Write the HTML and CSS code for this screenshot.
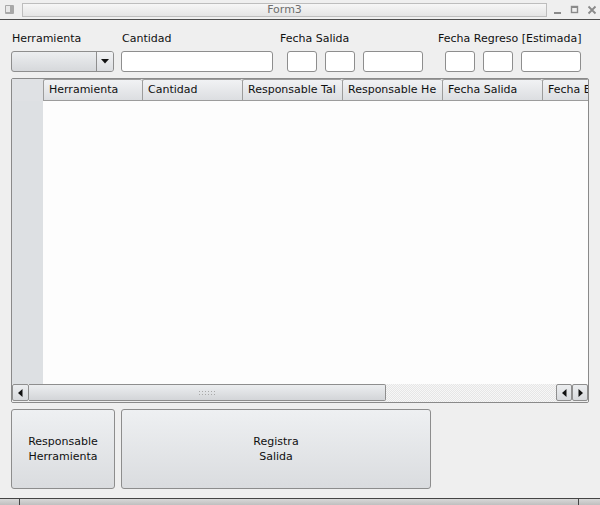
FILE: index.html
```html
<!DOCTYPE html>
<html>
<head>
<meta charset="utf-8">
<link rel="stylesheet" href="styles.css">
</head>
<body>
<div class="window">
  <div class="titlebar">
    <div class="sysicon"><div class="sysicon-in"></div></div>
    <div class="titlefield">Form3</div>
    <div class="tbtns">
      <svg width="10" height="10" viewBox="0 0 10 10"><rect x="1" y="7" width="7" height="2" fill="#8a8a8a"/></svg>
      <svg width="10" height="10" viewBox="0 0 10 10"><rect x="1.5" y="1.5" width="6" height="6" fill="none" stroke="#8a8a8a" stroke-width="1.4"/><rect x="1" y="1" width="7" height="2" fill="#8a8a8a"/></svg>
      <svg width="10" height="10" viewBox="0 0 10 10"><path d="M1.5 1.5 L8.5 8.5 M8.5 1.5 L1.5 8.5" stroke="#8a8a8a" stroke-width="1.8"/></svg>
    </div>
  </div>
  <div class="content">
    <div class="fields">
      <div class="group g1">
        <div class="lbl">Herramienta</div>
        <div class="combo"><div class="combo-main"></div><div class="combo-btn"><svg width="8" height="5" viewBox="0 0 8 5"><path d="M0 0 H8 L4 4.5 Z" fill="#111"/></svg></div></div>
      </div>
      <div class="group g2">
        <div class="lbl">Cantidad</div>
        <div class="inp w152"></div>
      </div>
      <div class="group g3">
        <div class="lbl">Fecha Salida</div>
        <div class="inrow"><div class="inp w30"></div><div class="inp w30"></div><div class="inp w60"></div></div>
      </div>
      <div class="group g4">
        <div class="lbl">Fecha Regreso [Estimada]</div>
        <div class="inrow"><div class="inp w30"></div><div class="inp w30"></div><div class="inp w60"></div></div>
      </div>
    </div>
    <div class="table">
      <div class="thead">
        <div class="corner"></div>
        <div class="cols">
          <div class="th first">Herramienta</div>
          <div class="th">Cantidad</div>
          <div class="th">Responsable Tal</div>
          <div class="th">Responsable He</div>
          <div class="th">Fecha Salida</div>
          <div class="th last">Fecha E</div>
        </div>
      </div>
      <div class="tbody">
        <div class="rowhdr"></div>
        <div class="cells"></div>
      </div>
      <div class="hscroll">
        <div class="sbtn"><svg width="5" height="8" viewBox="0 0 5 8"><path d="M4.5 0 V8 L0 4 Z" fill="#111"/></svg></div>
        <div class="slider"><div class="grip"></div></div>
        <div class="track"></div>
        <div class="sbtn r"><svg width="5" height="8" viewBox="0 0 5 8"><path d="M4.5 0 V8 L0 4 Z" fill="#111"/></svg></div>
        <div class="sbtn r"><svg width="5" height="8" viewBox="0 0 5 8"><path d="M0.5 0 V8 L5 4 Z" fill="#111"/></svg></div>
      </div>
    </div>
    <div class="actions">
      <div class="btn b1">Responsable<br>Herramienta</div>
      <div class="btn b2">Registra<br>Salida</div>
    </div>
  </div>
  <div class="bottombar"><div class="bb-a"></div><div class="bb-b"></div><div class="bb-c"></div></div>
</div>
</body>
</html>
```
FILE: styles.css
```css
* { box-sizing: border-box; }
html, body { margin: 0; padding: 0; }
body { background: #efefef; font-family: "DejaVu Sans", sans-serif; font-size: 11px; color: #101010; }
.window { width: 600px; height: 505px; background: #efefef; display: flex; flex-direction: column; overflow: hidden; }
.titlebar { height: 20px; border-bottom: 1px solid #4c4c4c; display: flex; align-items: center; background: #efefef; }
.sysicon { width: 9px; height: 9px; margin-left: 5px; background: #a8a8a8; border-radius: 1px; position: relative; }
.sysicon-in { position: absolute; left: 1px; top: 1px; width: 6px; height: 6px; background: #e8e8e8; border-right: 2px solid #a8a8a8; }
.titlefield { margin-left: 8px; width: 525px; height: 14px; border: 1px solid #bdbdbd; background: linear-gradient(#f6f6f6, #e4e4e4); color: #6e6e6e; font-size: 11px; line-height: 12px; text-align: center; }
.tbtns { display: flex; gap: 7px; margin-left: 6px; align-items: center; }
.content { padding: 12px 11px 0 11px; flex: 1; display: flex; flex-direction: column; }
.fields { display: flex; height: 40px; }
.group { display: flex; flex-direction: column; }
.lbl { height: 19px; line-height: 14px; padding-left: 1px; white-space: nowrap; }
.g3 .lbl, .g4 .lbl { padding-left: 0; }
.g1 { width: 103px; }
.g2 { margin-left: 7px; }
.g3 { margin-left: 7px; }
.g3 .inrow { margin-left: 7px; }
.g4 { margin-left: 15px; }
.g4 .inrow { margin-left: 7px; }
.inrow { display: flex; gap: 8px; }
.inp { height: 21px; background: #ffffff; border: 1px solid #8e8e8e; border-radius: 3px; }
.w152 { width: 152px; }
.w30 { width: 30px; }
.w60 { width: 60px; }
.combo { width: 103px; height: 21px; display: flex; border: 1px solid #8e8e8e; border-radius: 3px; overflow: hidden; background: linear-gradient(#eceef0, #d6d8db); }
.combo-main { flex: 1; }
.combo-btn { width: 17px; border-left: 1px solid #8e8e8e; display: flex; align-items: center; justify-content: center; background: linear-gradient(#f2f3f5, #dcdee1); }
.table { margin-top: 6px; width: 578px; height: 325px; border: 1px solid #8a8a8a; border-radius: 2px; display: flex; flex-direction: column; overflow: hidden; background: #fdfdfd; }
.thead { display: flex; height: 22px; flex: none; }
.corner { width: 31px; background: #dfe1e4; }
.cols { display: flex; flex: 1; overflow: hidden; }
.th { flex: none; width: 100px; height: 22px; border: 1px solid #9c9c9c; border-right: none; border-top-left-radius: 2px; border-top-right-radius: 2px; background: linear-gradient(#f1f2f4, #dcdee1); padding-left: 5px; line-height: 19px; white-space: nowrap; overflow: hidden; }
.th.first { width: 99px; }
.th.last { width: 47px; }
.tbody { flex: 1; display: flex; }
.rowhdr { width: 31px; background: #dde0e3; }
.cells { flex: 1; background: #fdfdfd; }
.hscroll { height: 18px; flex: none; display: flex; background: #efefef; }
.sbtn { width: 17px; height: 17px; border: 1px solid #8e8e8e; border-radius: 2px; background: linear-gradient(#eceef0, #d8dadd); display: flex; align-items: center; justify-content: center; }
.sbtn.r { width: 16px; }
.slider { width: 357px; height: 17px; border: 1px solid #8e8e8e; border-left: none; border-radius: 0 2px 2px 0; background: linear-gradient(#eceef0, #d3d5d8); display: flex; align-items: center; justify-content: center; }
.grip { width: 19px; height: 6px; background-image: radial-gradient(circle, #a8a8a8 0.7px, transparent 0.9px); background-size: 3px 3px; }
.track { flex: 1; background-color: #f4f4f4; background-image: repeating-conic-gradient(#e6e6e6 0 25%, #f7f7f7 0 50%); background-size: 2px 2px; }
.actions { display: flex; margin-top: 6px; gap: 6px; }
.btn { height: 80px; border: 1px solid #8d8d8d; border-radius: 3px; background: linear-gradient(#eef0f2, #dadcdf); display: flex; align-items: center; justify-content: center; text-align: center; line-height: 15px; }
.b1 { width: 104px; }
.b2 { width: 310px; }
.bottombar { height: 7px; border-top: 1px solid #444; display: flex; background: linear-gradient(#d8d8d8, #bfbfbf); }
.bb-a { width: 20px; border-right: 1px solid #444; }
.bb-b { width: 559px; border-right: 1px solid #444; }
.bb-c { flex: 1; }
```
